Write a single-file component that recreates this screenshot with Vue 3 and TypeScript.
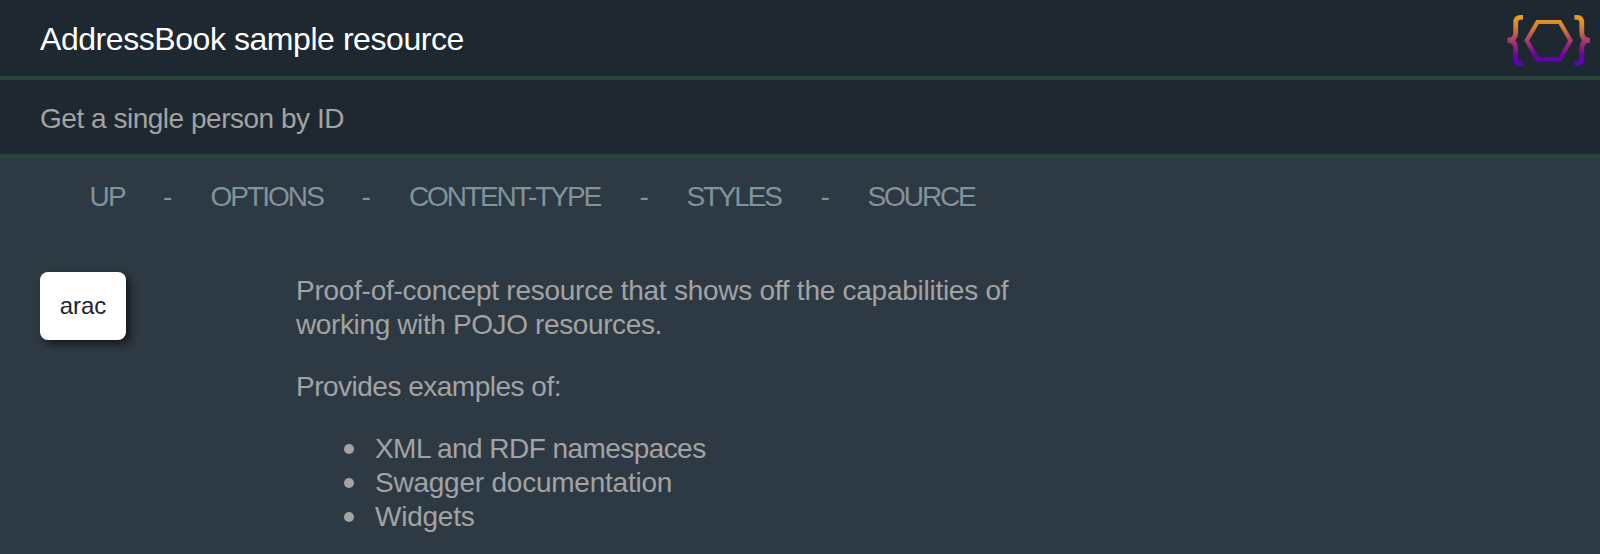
<script setup lang="ts">
interface NavItem {
  label: string
  name: string
}

const navItems: NavItem[] = [
  { label: 'UP', name: 'up' },
  { label: 'OPTIONS', name: 'options' },
  { label: 'CONTENT-TYPE', name: 'content-type' },
  { label: 'STYLES', name: 'styles' },
  { label: 'SOURCE', name: 'source' },
]

const features: { label: string; name: string }[] = [
  { label: 'XML and RDF namespaces', name: 'namespaces' },
  { label: 'Swagger documentation', name: 'swagger' },
  { label: 'Widgets', name: 'widgets' },
]
</script>

<template>
  <div class="page">
    <header class="bar title-bar">
      <h1 class="title">AddressBook sample resource</h1>
      <svg class="logo" width="86" height="54" viewBox="0 0 86 54" fill="none" aria-hidden="true">
        <defs>
          <linearGradient id="flame" gradientUnits="userSpaceOnUse" x1="0" y1="2" x2="0" y2="52">
            <stop offset="0" stop-color="#eda01b" />
            <stop offset="0.25" stop-color="#d17b36" />
            <stop offset="0.5" stop-color="#a43c68" />
            <stop offset="0.78" stop-color="#7200a2" />
            <stop offset="1" stop-color="#5700c5" />
          </linearGradient>
        </defs>
        <g stroke="url(#flame)" stroke-width="4.8">
          <path d="M18 3.4H15.5Q10.7 3.4 10.7 9V18.5Q10.7 26.2 2.5 26.4Q10.7 26.6 10.7 34.5V44Q10.7 49.5 15.5 49.5H18" />
          <path d="M69.5 3.4H72Q76.8 3.4 76.8 9V18.5Q76.8 26.2 85 26.4Q76.8 26.6 76.8 34.5V44Q76.8 49.5 72 49.5H69.5" />
          <path stroke-width="4.2" d="M32.5 8H54.8L65.6 26.6L54.8 45.4H32.5L21.7 26.6Z" />
        </g>
      </svg>
    </header>
    <div class="bar summary-bar">
      <p class="summary">Get a single person by ID</p>
    </div>
    <nav class="nav">
      <template v-for="(item, i) in navItems" :key="item.name">
        <span v-if="i > 0">-</span>
        <a :class="['link', item.name]">{{ item.label }}</a>
      </template>
    </nav>
    <main class="content">
      <button class="arac" type="button">arac</button>
      <section class="about">
        <p class="intro"><span class="line-a">Proof-of-concept resource that shows off the capabilities of</span><br />working with POJO resources.</p>
        <p>Provides examples of:</p>
        <ul>
          <li v-for="f in features" :key="f.name" :class="f.name">{{ f.label }}</li>
        </ul>
      </section>
    </main>
  </div>
</template>

<style>
body {
  margin: 0;
  background: #2d3a43;
}
</style>

<style scoped>
.page {
  box-sizing: border-box;
  height: 554px;
  overflow: hidden;
  background: #2d3a43;
  color: #a3a3a3;
  font-family: 'Liberation Sans', Arial, sans-serif;
  font-size: 28px;
  line-height: 34px;
}
.bar {
  box-sizing: border-box;
  display: flex;
  background: #1e2830;
  border-bottom: 4px solid #2a4239;
  padding-left: 40px;
}
.title-bar {
  height: 80px;
  justify-content: space-between;
  padding-right: 9px;
}
.title {
  margin: 20px 0 0;
  color: #fff;
  font-size: 32px;
  line-height: 38px;
  font-weight: 400;
  letter-spacing: -0.44px;
}
.logo {
  margin-top: 14px;
}
.summary-bar {
  height: 78px;
}
.summary {
  margin: 22px 0 0;
  letter-spacing: -0.48px;
}
.nav {
  display: grid;
  grid-template-columns: 73.5px 47.5px 151px 47.5px 230.5px 47px 134px 47px auto;
  padding: 22px 0 0 89.5px;
  color: #81939c;
  white-space: nowrap;
}
.options {
  letter-spacing: -1.95px;
}
.up {
  letter-spacing: -1.6px;
}
.content-type {
  letter-spacing: -2.1px;
}
.styles {
  letter-spacing: -2.2px;
}
.source {
  letter-spacing: -2.1px;
}
.content {
  display: flex;
  align-items: flex-start;
  padding: 58px 0 0 40px;
}
.arac {
  flex: none;
  width: 86px;
  height: 68px;
  padding: 0;
  border: 0;
  border-radius: 8px;
  background: #fff;
  color: #1e272f;
  box-shadow: 4px 4px 8px rgba(0, 0, 0, 0.6);
  font: 24px 'Liberation Sans', Arial, sans-serif;
}
.about {
  margin-left: 170px;
  letter-spacing: -0.5px;
  white-space: nowrap;
}
.about p {
  margin: 2px 0 28px;
}
.about p + p {
  margin-top: 0;
}
.about .intro {
  letter-spacing: -0.38px;
}
.line-a {
  letter-spacing: -0.26px;
}
ul {
  margin: 0;
  padding: 0;
  list-style: none;
}
li {
  display: flex;
  align-items: center;
}
li::before {
  content: '';
  width: 10px;
  height: 10px;
  margin: 0 21px 1px 48px;
  border-radius: 50%;
  background: #a3a3a3;
}
.namespaces {
  letter-spacing: -0.56px;
}
.swagger,
.widgets {
  letter-spacing: -0.23px;
}
</style>
